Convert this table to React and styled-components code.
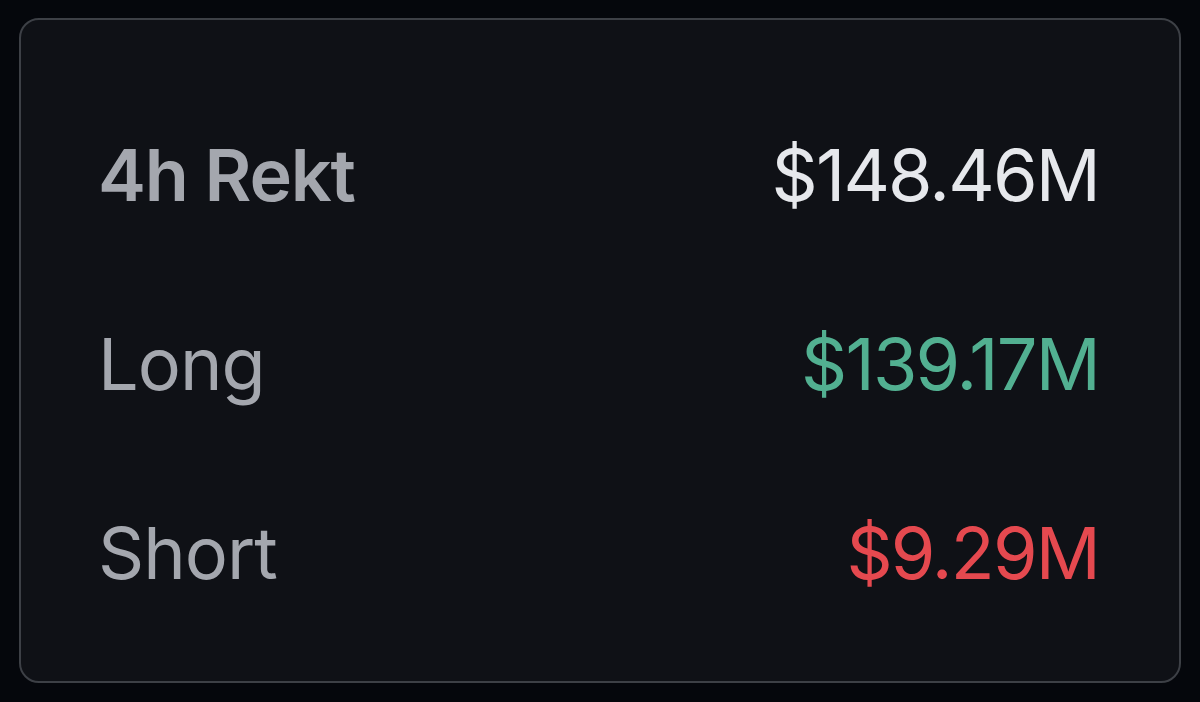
import React from 'react';
import styled, { createGlobalStyle } from 'styled-components';

const GlobalStyle = createGlobalStyle`
  html, body {
    margin: 0;
    padding: 0;
    background: #05070c;
  }
  body {
    font-family: Inter, "Noto Sans", "Liberation Sans", sans-serif;
  }
`;

const Page = styled.div`
  width: 1200px;
  height: 702px;
  padding: 18px 19px 19px 19px;
  box-sizing: border-box;
`;

const Card = styled.div`
  height: 100%;
  box-sizing: border-box;
  background: #0f1116;
  border: 2px solid #3d4046;
  border-radius: 20px;
  padding: 110px 80px 0 77px;
  display: flex;
  flex-direction: column;
  gap: 99px;
`;

const Row = styled.div`
  display: flex;
  justify-content: space-between;
  align-items: center;
  height: 90px;
  line-height: 90px;
  font-size: 72px;
`;

const Label = styled.span`
  color: #a4a7ae;
  font-weight: ${p => (p.$strong ? 600 : 400)};
  letter-spacing: ${p => (p.$strong ? '-1.2px' : '-1px')};
`;

const Value = styled.span`
  color: ${p => p.$color};
  font-weight: 400;
  letter-spacing: -1.8px;
`;

const rows = [
  { label: '4h Rekt', value: '$148.46M', color: '#e6e8ec', strong: true },
  { label: 'Long', value: '$139.17M', color: '#52b091' },
  { label: 'Short', value: '$9.29M', color: '#e5494f' },
];

export default function App() {
  return (
    <>
      <GlobalStyle />
      <Page>
        <Card>
          {rows.map(r => (
            <Row key={r.label}>
              <Label $strong={r.strong}>{r.label}</Label>
              <Value $color={r.color}>{r.value}</Value>
            </Row>
          ))}
        </Card>
      </Page>
    </>
  );
}
